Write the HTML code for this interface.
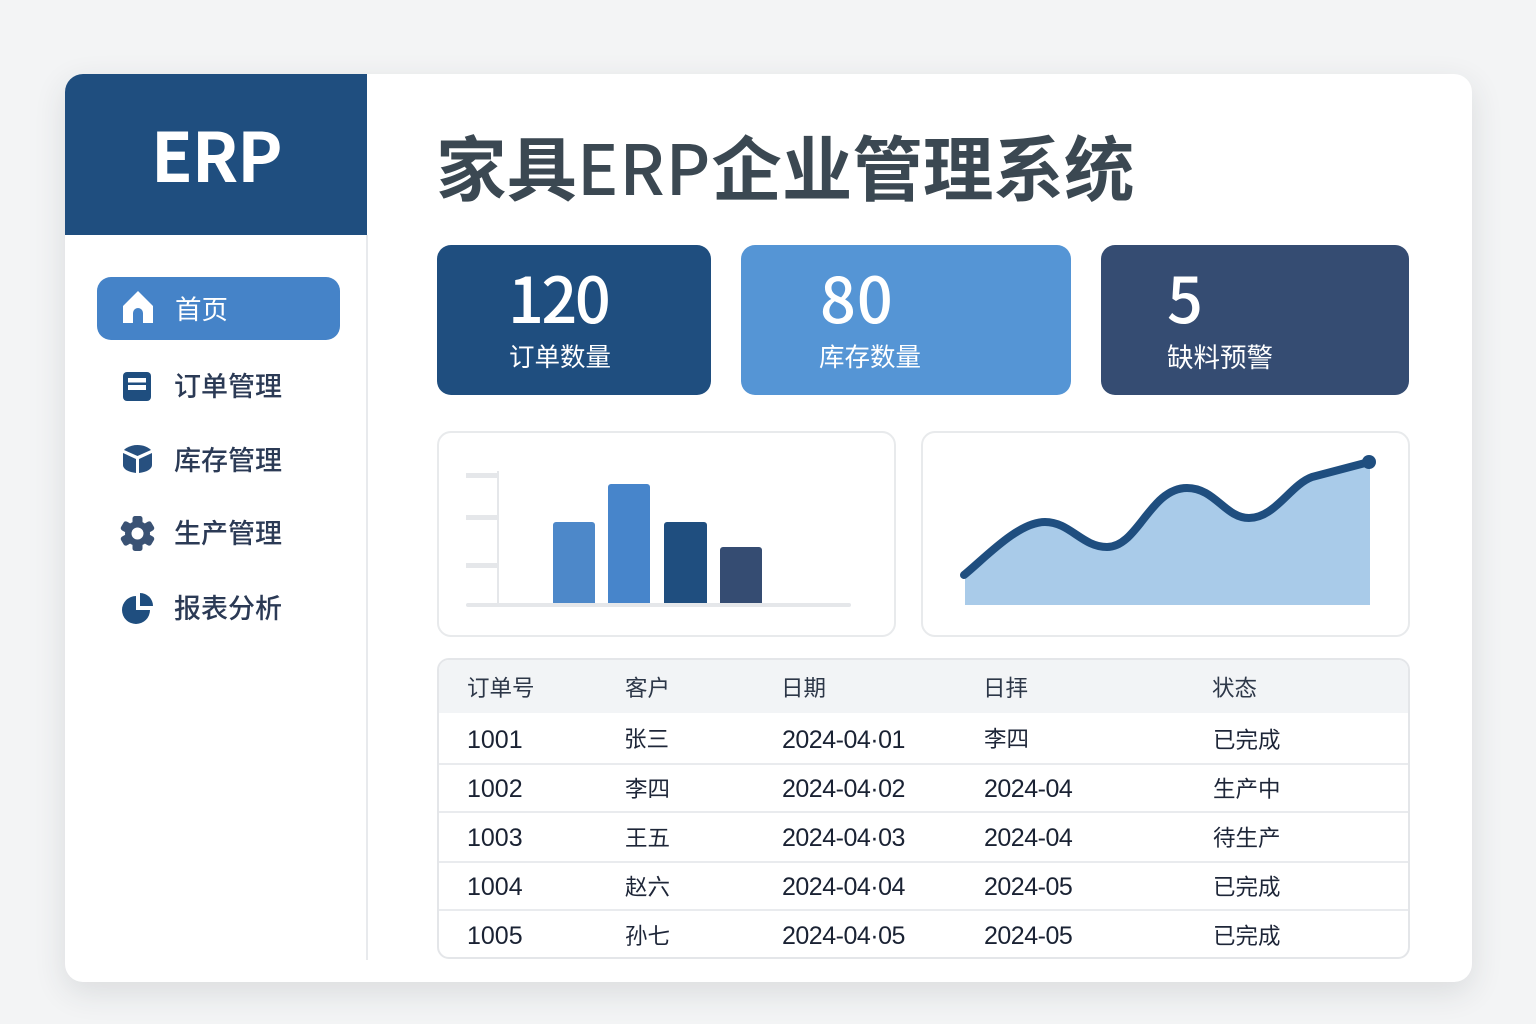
<!DOCTYPE html>
<html lang="zh-CN">
<head>
<meta charset="utf-8">
<title>家具ERP企业管理系统</title>
<style>
html,body{margin:0;padding:0;width:1536px;height:1024px;overflow:hidden;background:#f3f4f5}
body{position:relative;font-family:"Noto Sans CJK SC","Liberation Sans",sans-serif}
.a{position:absolute;box-sizing:border-box}
.t{position:absolute;white-space:nowrap;height:40px;line-height:40px}
.nav{font-size:27px;font-weight:500;color:#2b3a55;left:174px}
.num{font-size:63px;font-weight:500;color:#fff;letter-spacing:-2.5px;height:70px;line-height:70px;top:262px}
.lab{font-size:25.5px;color:#fff;top:336px}
.h{font-size:22.5px;color:#2d3748;top:667px}
.c{font-size:22.5px;color:#1e2638}
.n{font-family:"Liberation Sans",sans-serif;font-size:25px;color:#1a2233}
.d{letter-spacing:-.5px}
.line{position:absolute;left:439px;width:969px;height:2px;background:#e9ebee}
.bar{position:absolute;width:42px;border-radius:3px 3px 0 0}
.g{position:absolute;background:#e5e7ea}
</style>
</head>
<body>
<div class="a" style="left:65px;top:74px;width:1407px;height:908px;background:#fff;border-radius:18px;box-shadow:0 10px 32px rgba(40,50,60,.12)"></div>
<div class="a" style="left:65px;top:74px;width:302px;height:161px;background:#1f4e7f;border-radius:18px 0 0 0"></div>
<div class="a" style="left:366px;top:235px;width:2px;height:725px;background:#e8eaed"></div>
<div class="t" style="left:151px;top:108px;height:90px;line-height:90px;font-size:68px;font-weight:700;letter-spacing:-1px;color:#fff">ERP</div>

<div class="a" style="left:97px;top:277px;width:243px;height:63px;background:#4583c8;border-radius:14px"></div>
<svg class="a" style="left:0;top:0" width="400" height="700" viewBox="0 0 400 700">
<path d="M138 291 L153 306 V323 H143 V313 a5 5 0 0 0 -10 0 V323 H123 V306 Z" fill="#fff"/>
<rect x="123" y="372" width="28" height="29" rx="4" fill="#1f4e7f"/>
<rect x="128" y="378" width="18" height="4.5" fill="#fff"/>
<rect x="128" y="385" width="18" height="5" fill="#fff"/>
<g fill="#27507f">
<path d="M137.5 445 C143 445 148 447 151 450 L137.5 456 L124 450 C127 447 132 445 137.5 445Z"/>
<path d="M123 453 L136 459 V473 C128 472 123 469 123 465 Z"/>
<path d="M152 453 L139 459 V473 C147 472 152 469 152 465 Z"/>
</g>
<g fill="#3a5274">
<circle cx="137.5" cy="533.5" r="12.5"/>
<g>
<rect x="132.5" y="516" width="10" height="35" rx="2.5"/>
<rect x="132.5" y="516" width="10" height="35" rx="2.5" transform="rotate(60 137.5 533.5)"/>
<rect x="132.5" y="516" width="10" height="35" rx="2.5" transform="rotate(120 137.5 533.5)"/>
</g>
</g>
<circle cx="137.5" cy="533.5" r="6" fill="#fff"/>
<g fill="#1f4e7f">
<path d="M136 596 V610 H150 A14 14 0 1 1 136 596 Z"/>
<path d="M140 593 A13 13 0 0 1 153 606 H140 Z"/>
</g>
</svg>
<div class="t" style="left:175px;top:288px;font-size:26.5px;color:#fff">首页</div>
<div class="t nav" style="top:365px">订单管理</div>
<div class="t nav" style="top:439px">库存管理</div>
<div class="t nav" style="top:512px">生产管理</div>
<div class="t nav" style="top:587px">报表分析</div>

<div class="t" style="left:436px;top:115px;height:100px;line-height:100px;font-size:70.5px;font-weight:700;color:#3b4852">家具<span style="letter-spacing:1px;font-size:69px;font-weight:500">ERP</span>企业管理系统</div>

<div class="a" style="left:437px;top:245px;width:274px;height:150px;background:#1f4e7f;border-radius:14px"></div>
<div class="a" style="left:741px;top:245px;width:330px;height:150px;background:#5595d5;border-radius:14px"></div>
<div class="a" style="left:1101px;top:245px;width:308px;height:150px;background:#354c72;border-radius:14px"></div>
<div class="t num" style="left:508px">120</div>
<div class="t num" style="left:820px;letter-spacing:1px">80</div>
<div class="t num" style="left:1167px">5</div>
<div class="t lab" style="left:509px">订单数量</div>
<div class="t lab" style="left:819px">库存数量</div>
<div class="t lab" style="left:1167px;font-size:26.5px">缺料预警</div>

<div class="a" style="left:437px;top:431px;width:459px;height:206px;border:2px solid #e8eaec;border-radius:14px;background:#fff"></div>
<div class="a" style="left:921px;top:431px;width:489px;height:206px;border:2px solid #e8eaec;border-radius:14px;background:#fff"></div>

<div class="g" style="left:466px;top:473px;width:31px;height:5px"></div>
<div class="g" style="left:466px;top:515px;width:31px;height:5px"></div>
<div class="g" style="left:466px;top:563px;width:31px;height:5px"></div>
<div class="g" style="left:497px;top:471px;width:2px;height:133px"></div>
<div class="g" style="left:466px;top:603px;width:385px;height:4px;border-radius:2px"></div>
<div class="bar" style="left:553px;top:522px;height:81px;background:#4d88c9"></div>
<div class="bar" style="left:608px;top:484px;height:119px;background:#4785cb"></div>
<div class="bar" style="left:664px;top:522px;width:43px;height:81px;background:#1f4e7f"></div>
<div class="bar" style="left:720px;top:547px;height:56px;background:#354c72"></div>

<svg class="a" style="left:0;top:0" width="1536" height="1024" viewBox="0 0 1536 1024">
<path d="M965 575 C985 558 1018 522 1045 522 C1070 522 1082 547 1107 547 C1138 547 1150 488 1187 488 C1215 488 1225 518 1249 518 C1275 518 1290 485 1312 477 L1370 462 V605 H965 Z" fill="#a9cbe9"/>
<path d="M964 575 C985 558 1018 522 1045 522 C1070 522 1082 547 1107 547 C1138 547 1150 488 1187 488 C1215 488 1225 518 1249 518 C1275 518 1290 485 1312 477 L1369 462" fill="none" stroke="#1f4e7f" stroke-width="8" stroke-linecap="round" stroke-linejoin="round"/>
<circle cx="1369" cy="462" r="7" fill="#1f4e7f"/>
</svg>

<div class="a" style="left:437px;top:658px;width:973px;height:301px;border:2px solid #e4e6e9;border-radius:12px;background:#fff;overflow:hidden">
<div style="height:53px;background:#f2f4f6"></div>
</div>
<div class="line" style="top:763px"></div>
<div class="line" style="top:811px"></div>
<div class="line" style="top:861px"></div>
<div class="line" style="top:909px"></div>

<div class="t h" style="left:467px">订单号</div>
<div class="t h" style="left:625px">客户</div>
<div class="t h" style="left:781px">日期</div>
<div class="t h" style="left:983px">日拝</div>
<div class="t h" style="left:1212px">状态</div>

<div class="t n" style="left:467px;top:720px">1001</div>
<div class="t c" style="left:624px;top:718px">张三</div>
<div class="t n d" style="left:782px;top:720px">2024-04·01</div>
<div class="t c" style="left:984px;top:718px">李四</div>
<div class="t c" style="left:1213px;top:719px">已完成</div>

<div class="t n" style="left:467px;top:769px">1002</div>
<div class="t c" style="left:625px;top:768px">李四</div>
<div class="t n d" style="left:782px;top:769px">2024-04·02</div>
<div class="t n d" style="left:984px;top:769px">2024-04</div>
<div class="t c" style="left:1213px;top:768px">生产中</div>

<div class="t n" style="left:467px;top:818px">1003</div>
<div class="t c" style="left:625px;top:817px">王五</div>
<div class="t n d" style="left:782px;top:818px">2024-04·03</div>
<div class="t n d" style="left:984px;top:818px">2024-04</div>
<div class="t c" style="left:1213px;top:817px">待生产</div>

<div class="t n" style="left:467px;top:867px">1004</div>
<div class="t c" style="left:625px;top:866px">赵六</div>
<div class="t n d" style="left:782px;top:867px">2024-04·04</div>
<div class="t n d" style="left:984px;top:867px">2024-05</div>
<div class="t c" style="left:1213px;top:866px">已完成</div>

<div class="t n" style="left:467px;top:916px">1005</div>
<div class="t c" style="left:625px;top:915px">孙七</div>
<div class="t n d" style="left:782px;top:916px">2024-04·05</div>
<div class="t n d" style="left:984px;top:916px">2024-05</div>
<div class="t c" style="left:1213px;top:915px">已完成</div>
</body>
</html>
